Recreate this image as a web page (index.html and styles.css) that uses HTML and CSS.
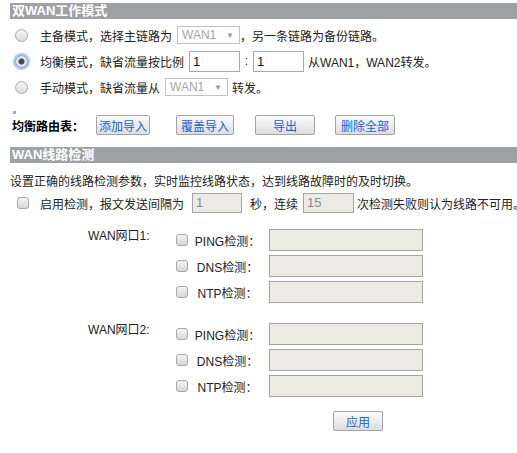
FILE: index.html
```html
<!DOCTYPE html>
<html>
<head>
<meta charset="utf-8">
<link rel="stylesheet" href="styles.css">
</head>
<body>
<div class="page">
  <div class="bar">双WAN工作模式</div>
  <div class="modes">
    <div class="row">
      <span class="radio"></span>
      <span class="txt">主备模式，选择主链路为</span>
      <span class="select sel1">WAN1<span class="arrow">▼</span></span>
      <span class="txt">，另一条链路为备份链路。</span>
    </div>
    <div class="row">
      <span class="radio on"></span>
      <span class="txt">均衡模式，缺省流量按比例</span>
      <span class="input ratio r1">1</span>
      <span class="colon">:</span>
      <span class="input ratio r2">1</span>
      <span class="txt after">从WAN1，WAN2转发。</span>
    </div>
    <div class="row">
      <span class="radio"></span>
      <span class="txt">手动模式，缺省流量从</span>
      <span class="select sel1">WAN1<span class="arrow">▼</span></span>
      <span class="txt after">转发。</span>
    </div>
  </div>
  <div class="mark"></div>
  <div class="route">
    <span class="route-label">均衡路由表：</span>
    <span class="btn b1">添加导入</span>
    <span class="btn b2">覆盖导入</span>
    <span class="btn b3">导出</span>
    <span class="btn b4">删除全部</span>
  </div>
  <div class="bar bar2">WAN线路检测</div>
  <div class="desc">设置正确的线路检测参数，实时监控线路状态，达到线路故障时的及时切换。</div>
  <div class="enable">
    <span class="check"></span>
    <span class="txt">启用检测，报文发送间隔为</span>
    <span class="input dis e1">1</span>
    <span class="txt sec">秒，连续</span>
    <span class="input dis e2">15</span>
    <span class="txt tail">次检测失败则认为线路不可用。</span>
  </div>
  <div class="grp">
    <div class="grp-label">WAN网口1:</div>
    <div class="grp-rows">
      <div class="grow"><span class="check"></span><span class="glab">PING检测：</span><span class="input dis wide"></span></div>
      <div class="grow"><span class="check"></span><span class="glab">DNS检测：</span><span class="input dis wide"></span></div>
      <div class="grow"><span class="check"></span><span class="glab">NTP检测：</span><span class="input dis wide"></span></div>
    </div>
  </div>
  <div class="grp grp2">
    <div class="grp-label">WAN网口2:</div>
    <div class="grp-rows">
      <div class="grow"><span class="check"></span><span class="glab">PING检测：</span><span class="input dis wide"></span></div>
      <div class="grow"><span class="check"></span><span class="glab">DNS检测：</span><span class="input dis wide"></span></div>
      <div class="grow"><span class="check"></span><span class="glab">NTP检测：</span><span class="input dis wide"></span></div>
    </div>
  </div>
  <div class="apply-row"><span class="btn apply">应用</span></div>
</div>
</body>
</html>
```
FILE: styles.css
```css
* { box-sizing: border-box; }
html, body { margin: 0; padding: 0; background: #fff; }
body {
  font-family: "Liberation Sans", "Noto Sans CJK SC", sans-serif;
  font-size: 12px;
  color: #222;
  overflow: hidden;
}
.page { padding: 3px 0 0 10px; width: 517px; }
.bar {
  background: #9fa2a5;
  color: #fff;
  font-weight: bold;
  font-size: 13px;
  height: 16px;
  line-height: 16px;
  padding-left: 2px;
  white-space: nowrap;
}
.modes { margin-top: 3px; }
.row {
  height: 26px;
  display: flex;
  align-items: center;
  white-space: nowrap;
}
.radio {
  width: 13px; height: 13px;
  border-radius: 50%;
  border: 1px solid #aaa;
  background: linear-gradient(#f6f6f6, #dadada);
  margin-left: 5px;
  margin-right: 12px;
  flex: none;
  position: relative;
}
.radio.on {
  background: radial-gradient(circle, #4a4a4a 0 2.5px, #e4e4e4 3.5px);
  box-shadow: 0 0 0 2px #a9c8f4;
  border-color: #7a9fd6;
}
.select {
  display: inline-flex;
  align-items: center;
  justify-content: space-between;
  height: 18px;
  width: 63px;
  border: 1px solid #c2c2c2;
  color: #a6a6a6;
  padding: 0 5px 0 4px;
  margin-left: 5px;
  font-size: 12px;
  flex: none;
}
.arrow { font-size: 8px; color: #999; }
.input {
  display: inline-block;
  border: 1px solid #a9a9a9;
  background: #fff;
  flex: none;
  padding-left: 3px;
}
.ratio { height: 21px; width: 51px; line-height: 19px; color: #111; font-size: 13px; }
.r1 { margin-left: 5px; }
.colon { width: 13px; text-align: center; flex: none; }
.after { margin-left: 4px; }
.mark { width: 3px; height: 3px; background: #a8a8a8; margin: 11px 0 0 3px; }
.route {
  height: 22px;
  display: flex;
  align-items: center;
  white-space: nowrap;
}
.route-label { font-weight: bold; font-size: 12px; color: #000; margin-left: 2px; width: 84px; flex: none; }
.btn {
  display: inline-flex;
  align-items: center;
  justify-content: center;
  height: 20px;
  border: 1px solid #a3a3a3;
  border-radius: 2px;
  background: linear-gradient(#fbfbfb, #dedede);
  color: #1a62d6;
  font-size: 12px;
  flex: none;
}
.b1 { width: 54px; }
.b2 { width: 58px; margin-left: 26px; }
.b3 { width: 60px; margin-left: 21px; }
.b4 { width: 60px; margin-left: 20px; }
.bar2 { margin-top: 11px; }
.desc { margin-top: 9px; height: 20px; line-height: 20px; white-space: nowrap; }
.enable {
  height: 22px;
  display: flex;
  align-items: center;
  white-space: nowrap;
}
.check {
  width: 12px; height: 12px;
  border: 1px solid #a8a8a8;
  border-radius: 3px;
  background: linear-gradient(#f4f4f4, #d6d6d6);
  flex: none;
}
.enable .check { margin-left: 7px; margin-right: 11px; }
.dis { background: #ebebe4; border-color: #a4a4a4; color: #8a8a8a; }
.e1 { width: 50px; height: 20px; line-height: 18px; margin-left: 8px; font-size: 13px; }
.sec { margin-left: 8px; }
.e2 { width: 51px; height: 20px; line-height: 18px; margin-left: 5px; font-size: 13px; }
.tail { margin-left: 3px; }
.grp { display: flex; margin-left: 78px; margin-top: 15px; }
.grp2 { margin-top: 20px; }
.grp-label { width: 88px; flex: none; line-height: 14px; padding-top: 0; }
.grp-rows { display: flex; flex-direction: column; gap: 4px; }
.grow { display: flex; align-items: center; height: 22px; }
.glab { width: 77px; margin-left: 1px; text-align: center; flex: none; }
.wide { width: 154px; height: 22px; margin-left: 3px; }
.apply-row { margin-top: 14px; padding-left: 323px; }
.apply { width: 50px; }
```
